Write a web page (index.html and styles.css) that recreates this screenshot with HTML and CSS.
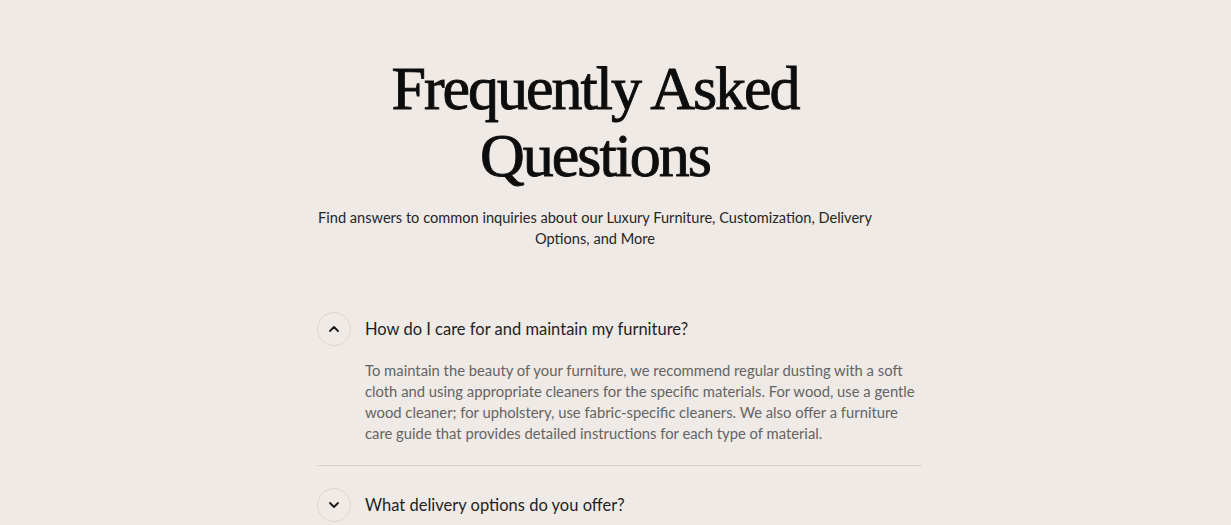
FILE: index.html
```html
<!DOCTYPE html>
<html lang="en">
<head>
<meta charset="utf-8">
<title>FAQ</title>
<link rel="stylesheet" href="styles.css">
</head>
<body>
<section class="faq">
  <header class="faq-head">
    <h1 class="faq-title">Frequently Asked<br>Questions</h1>
    <p class="faq-sub">Find answers to common inquiries about our Luxury Furniture, Customization, Delivery Options, and More</p>
  </header>
  <div class="faq-list">
    <div class="faq-item open">
      <div class="faq-q">
        <span class="faq-icon">
          <svg width="14" height="14" viewBox="0 0 14 14"><path d="M3 9 L7 5 L11 9" fill="none" stroke="#1a1a1a" stroke-width="1.8" stroke-linecap="round" stroke-linejoin="round"/></svg>
        </span>
        <span class="faq-q-text">How do I care for and maintain my furniture?</span>
      </div>
      <p class="faq-a">To maintain the beauty of your furniture, we recommend regular dusting with a soft cloth and using appropriate cleaners for the specific materials. For wood, use a gentle wood cleaner; for upholstery, use fabric-specific cleaners. We also offer a furniture care guide that provides detailed instructions for each type of material.</p>
    </div>
    <div class="faq-item">
      <div class="faq-q">
        <span class="faq-icon">
          <svg width="14" height="14" viewBox="0 0 14 14"><path d="M3 5 L7 9 L11 5" fill="none" stroke="#1a1a1a" stroke-width="1.8" stroke-linecap="round" stroke-linejoin="round"/></svg>
        </span>
        <span class="faq-q-text">What delivery options do you offer?</span>
      </div>
    </div>
  </div>
</section>
</body>
</html>
```
FILE: styles.css
```css
html, body {
  margin: 0;
  padding: 0;
}
body {
  background: #efeae6;
  font-family: "Lato", "Noto Sans", sans-serif;
  color: #1f1f1f;
  height: 525px;
  overflow: hidden;
}
.faq {
  width: 605px;
  margin: 0 0 0 317px;
  padding-top: 55px;
}
.faq-head {
  width: 556px;
  text-align: center;
}
.faq-title {
  margin: 0;
  font-family: "Liberation Serif", serif;
  font-weight: 400;
  font-size: 62px;
  line-height: 67px;
  color: #0d0d0d;
  letter-spacing: -2px;
  -webkit-text-stroke: 0.9px #0d0d0d;
}
.faq-sub {
  margin: 18px 0 0;
  font-size: 14.6px;
  line-height: 21px;
  color: #262626;
}
.faq-list {
  margin-top: 60px;
}
.faq-item {
  border-bottom: 1px solid #d9d3cf;
}
.faq-item:last-child {
  border-bottom: none;
}
.faq-q {
  display: flex;
  align-items: center;
  gap: 14px;
  padding: 3px 0 6px;
}
.faq-icon {
  width: 32px;
  height: 32px;
  border: 1px solid #dcd5d0;
  border-radius: 50%;
  display: flex;
  align-items: center;
  justify-content: center;
  flex-shrink: 0;
}
.faq-q-text {
  font-size: 16.5px;
  color: #1f1f1f;
}
.faq-a {
  margin: 8px 0 0 48px;
  padding-bottom: 21px;
  font-size: 14.8px;
  line-height: 21px;
  color: #646464;
}
.faq-item + .faq-item .faq-q {
  padding-top: 22px;
}
```
